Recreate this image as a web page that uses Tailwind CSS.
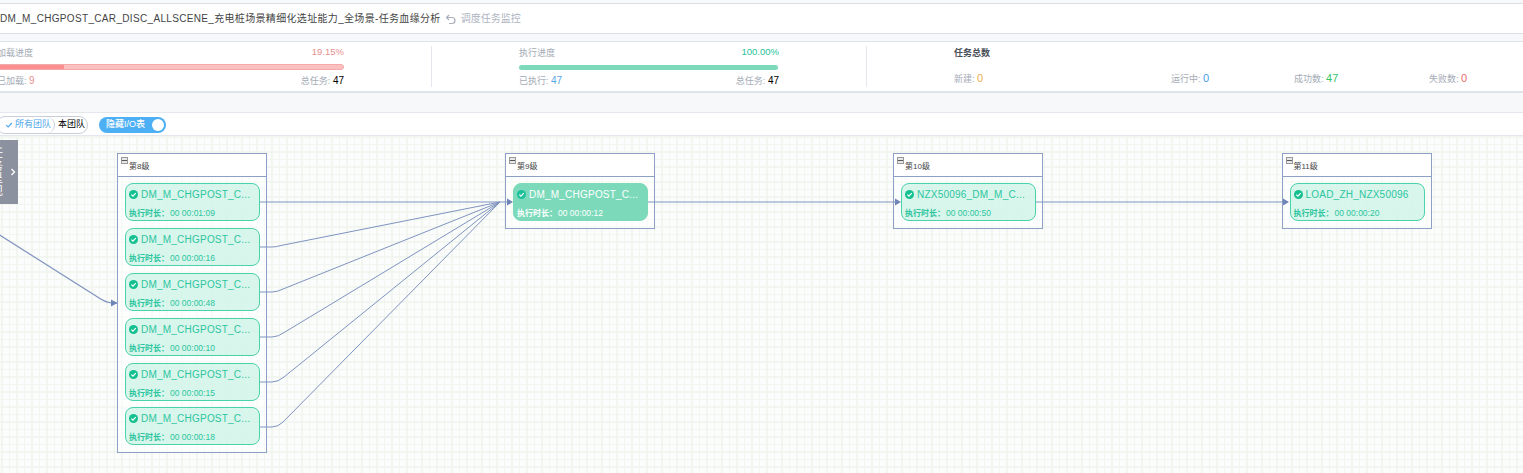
<!DOCTYPE html>
<html lang="zh">

<head>
  <meta charset="UTF-8" />
  <script src="https://cdn.jsdelivr.net/npm/@tailwindcss/browser@4"></script>
  <title>任务血缘分析</title>
</head>

<body class="h-[473px] w-[1523px] overflow-hidden bg-[#f7f8fa] font-['Liberation_Sans','Noto_Sans_CJK_SC',sans-serif]">
  <!-- title -->
  <header class="mt-[3px] flex h-[31px] items-center border-y border-[#dcdfe6] bg-white text-[10px]">
    <span class="tracking-[0.33px] text-[#444]">DM_M_CHGPOST_CAR_DISC_ALLSCENE_充电桩场景精细化选址能力_全场景-任务血缘分析</span>
    <svg class="ml-[4px] h-3 w-3 text-[#a9b0bd]" viewBox="0 0 24 24" fill="none" stroke="currentColor" stroke-width="2.4">
      <path d="M8 4 3 9l5 5" />
      <path d="M3 9h11a6 6 0 0 1 0 12H8" />
    </svg>
    <span class="ml-[4px] text-[#aeb4bf]">调度任务监控</span>
  </header>

  <!-- stats -->
  <section class="mt-[7px] flex h-[52px] border-y border-b-2 border-[#dfe3ea] bg-white text-[9px] text-[#a4abb6]">
    <div class="ml-[-3px] flex w-[347px] flex-col pt-[3px]">
      <div class="flex h-[17px] items-center justify-between">
        <span>加载进度</span><span class="mb-[3px] text-[9.500px] text-[#e88f8f]">19.15%</span>
      </div>
      <div class="mt-[2px] h-[6px] overflow-hidden rounded-full border border-[#f3a9a9] bg-[#fcc0c0]">
        <div class="h-full w-[19.15%] bg-[#fb8f8f]"></div>
      </div>
      <div class="mt-[3px] flex justify-between">
        <span>已加载: <span class="text-[10px] text-[#e88f8f]">9</span></span>
        <span>总任务: <span class="text-[10px] text-black">47</span></span>
      </div>
    </div>
    <div class="mx-[87px] my-1 w-px bg-[#e4e7ed]"></div>
    <div class="flex w-[260px] flex-col pt-[3px]">
      <div class="flex h-[17px] items-center justify-between">
        <span>执行进度</span><span class="mb-[3px] text-[9.500px] text-[#1fc39a]">100.00%</span>
      </div>
      <div class="mt-[3px] h-[5px] w-[259px] rounded-full bg-[#7cdabb]"></div>
      <div class="mt-[3px] flex justify-between">
        <span>已执行: <span class="text-[10px] text-[#5aa7e6]">47</span></span>
        <span>总任务: <span class="text-[10px] text-black">47</span></span>
      </div>
    </div>
    <div class="mx-[87px] my-1 w-px bg-[#e4e7ed]"></div>
    <div class="flex flex-1 flex-col pt-[5px]">
      <div class="font-bold text-[#4a4f58]">任务总数</div>
      <div class="mt-[9px] flex items-center">
        <span class="w-[217px]">新建: <span class="text-[11px] text-[#f0ad4e]">0</span></span>
        <span class="w-[123px]">运行中: <span class="text-[11px] text-[#3f9be8]">0</span></span>
        <span class="w-[135px]">成功数: <span class="text-[11px] text-[#35c46a]">47</span></span>
        <span>失败数: <span class="text-[11px] text-[#ec6a6a]">0</span></span>
      </div>
    </div>
  </section>

  <!-- toolbar -->
  <div class="mt-[19px] flex h-[24px] items-center border-y border-[#e4e7ed] bg-white pt-px text-[9px]">
    <div class="ml-[-4px] flex h-[18px] w-[92px] items-center rounded-full border border-[#c9ced8]">
      <span class="flex h-full w-[58px] items-center justify-end gap-[2px] rounded-full border-r border-[#c9ced8] pr-[3px] text-[#4fa8ea]">
        <svg class="h-2 w-2" viewBox="0 0 10 10" fill="none" stroke="currentColor" stroke-width="1.5">
          <path d="M1.5 5.2 4 7.5 8.5 2.5" />
        </svg>
        所有团队
      </span>
      <span class="ml-[3px] text-black">本团队</span>
    </div>
    <div class="ml-[11px] flex h-[16px] w-[67px] items-center justify-between rounded-full bg-[#4eb0f4] pl-[7px] pr-[2px] font-medium text-white">
      <span>隐藏I/O表</span>
      <span class="h-[12px] w-[12px] rounded-full bg-white"></span>
    </div>
  </div>

  <!-- lineage canvas -->
  <main class="relative h-[337px] overflow-hidden bg-[#fbfcfc] bg-[linear-gradient(#edf2e9_1px,transparent_1px),linear-gradient(90deg,#edf2e9_1px,transparent_1px),linear-gradient(#f3f6f0_1px,transparent_1px),linear-gradient(90deg,#f3f6f0_1px,transparent_1px)] [background-size:15px_15px,15px_15px,7.5px_7.5px,7.5px_7.5px] [background-position:1.5px_0.5px,1.5px_0.5px,1.5px_0.5px,1.5px_0.5px]">
    <div class="absolute left-0 top-[4px] flex h-[64px] w-[18px] items-center overflow-hidden bg-[#8b919e] text-white">
      <span class="ml-[-8px] w-3 shrink-0 text-[11px] leading-[12.500px]">任务呈现</span>
      <svg class="ml-[5px] h-2 w-2 shrink-0" viewBox="0 0 8 8" fill="none" stroke="currentColor" stroke-width="1.3">
        <path d="M2.5 1 5.5 4 2.5 7" />
      </svg>
    </div>

    <div id="groups"></div>

    <svg class="pointer-events-none absolute left-0 top-0" width="1523" height="337" fill="none" stroke="#7f93bf" stroke-width="1">
      <path d="M-2 98 96 160Q105 166.500 112 167H117" stroke-width="1.2" />
      <path d="M260 66H507" />
      <path d="M260 111H272Q276 111 281 109.500L500 66" />
      <path d="M260 156H272Q277 156 283 153L500 66" />
      <path d="M260 201H272Q278 201 285 196L500 66" />
      <path d="M260 246H272Q278 246 284 241L500 66" />
      <path d="M260 291H272Q278 291 283 286L500 66" />
      <path d="M648 66H895" />
      <path d="M1036 66H1283" />
      <g fill="#6f85b8" stroke="none">
        <path d="M111 163.500 117.500 167 111 170.500Z" />
        <path d="M507 62.500 513 66 507 69.500Z" />
        <path d="M895 62.500 901 66 895 69.500Z" />
        <path d="M1283 62.500 1289 66 1283 69.500Z" />
      </g>
    </svg>
  </main>

  <script>
    const check = (cls) => `<svg class="h-[9px] w-[9px] shrink-0 ${cls}" viewBox="0 0 10 10"><circle cx="5" cy="5" r="5" fill="currentColor"/><path d="M2.600 5.200 4.400 6.900 7.500 3.500" fill="none" stroke-width="1.300" class="stroke-white"/></svg>`;

    function card(name, time, active) {
      const box = active
        ? "border-[#7cdabb] bg-[#7cdabb] text-white"
        : "border-[#4ad2ab] bg-[#c9f2e4]/70 text-[#2cc5a0]";
      const iconColor = active ? "text-[#1cc09a]" : "text-[#14c08f]";
      return `<div class="h-[38px] w-[135px] rounded-[8px] border px-[3px] ${box}">
        <div class="mt-[4px] flex items-center gap-[3px] whitespace-nowrap text-[10px] leading-[13px] tracking-[0.22px]">${check(iconColor)}<span>${name}</span></div>
        <div class="mt-[7px] whitespace-nowrap text-[8px] leading-[11px]"><span class="font-bold">执行时长：</span><span class="ml-px text-[8.500px]">${time}</span></div>
      </div>`;
    }

    function group(left, title, cards) {
      return `<section class="absolute top-[17px] w-[150px] border border-[#8fa0c6] bg-white/50" style="left:${left}px">
        <div class="relative h-[23px] border-b border-[#8fa0c6] bg-white pl-[11px] pt-[8px] text-[8px] leading-[10px] text-[#444]">
          <span class="absolute left-[3px] top-[3px] flex h-[7px] w-[7px] items-center justify-center border border-[#999] bg-[#e8e8e8]"><span class="h-px w-[5px] bg-[#555]"></span></span>${title}
        </div>
        <div class="flex flex-col gap-[6.900px] pb-[6.500px] pl-[7px] pt-[6px]">${cards.join("")}</div>
      </section>`;
    }

    const name = "DM_M_CHGPOST_C...";
    document.getElementById("groups").innerHTML = [
      group(117, "第8级", ["00 00:01:09", "00 00:00:16", "00 00:00:48", "00 00:00:10", "00 00:00:15", "00 00:00:18"].map((t) => card(name, t))),
      group(505, "第9级", [card(name, "00 00:00:12", true)]),
      group(893, "第10级", [card("NZX50096_DM_M_C...", "00 00:00:50")]),
      group(1281.5, "第11级", [card("LOAD_ZH_NZX50096", "00 00:00:20")]),
    ].join("");
  </script>
</body>

</html>
